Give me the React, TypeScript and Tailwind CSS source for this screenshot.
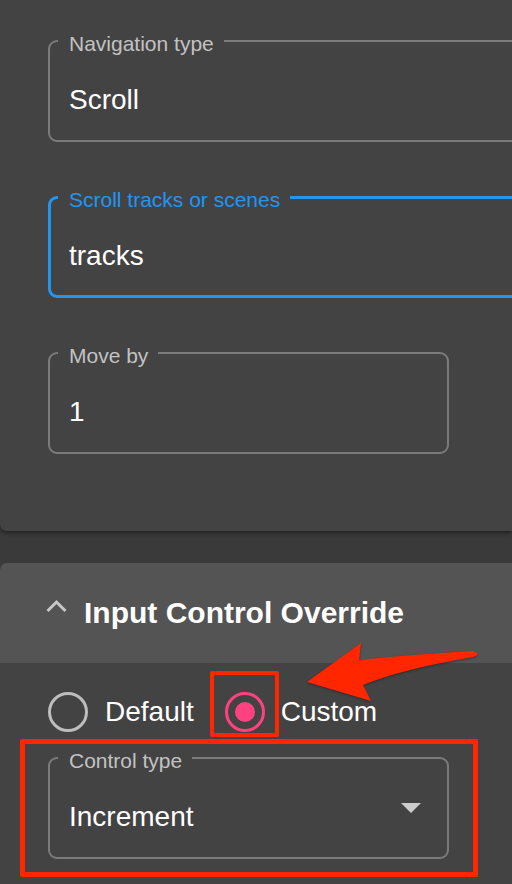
import React from 'react';

const font = { fontFamily: '"Liberation Sans", Arial, sans-serif' };

interface OutlinedFieldProps {
    label: string;
    value: string;
    focused?: boolean;
    select?: boolean;
    className?: string;
}

const OutlinedField: React.FC<OutlinedFieldProps> = ({ label, value, focused, select, className = '' }) => {
    return (
        <div
            className={`relative h-[102px] rounded-[9px] ${
                focused ? 'border-[3px] border-[#2196f3]' : 'border-2 border-[#7b7b7b]'
            } ${className}`}
        >
            {/* floating label sits over the top border */}
            <span
                className={`absolute ${focused ? 'left-[7px] top-[-11px]' : 'left-[8px] top-[-10px]'} px-[11px] pr-[10px] bg-[#434343] text-[21px] leading-[24px] whitespace-nowrap ${
                    focused ? 'text-[#2196f3]' : 'text-[#c2c2c2]'
                }`}
            >
                {label}
            </span>
            <div className={`${focused ? 'pt-[41px] pl-[18px]' : 'pt-[42px] pl-[19px]'} text-[28px] leading-[32px] text-white`}>
                {value}
            </div>
            {select && (
                <svg className="absolute right-[26px] top-[44px]" width="20" height="10" viewBox="0 0 20 10">
                    <path d="M0 0 L20 0 L10 10 Z" fill="#cdcdcd" />
                </svg>
            )}
        </div>
    );
};

export default function App() {
    return (
        <div className="w-[512px] h-[884px] overflow-hidden bg-[#3a3a3a] relative" style={font}>
            {/* Navigation settings card */}
            <div className="h-[531px] bg-[#434343] rounded-bl-[7px] shadow-[0_2px_4px_rgba(0,0,0,0.45)] pt-[40px] pl-[48px]">
                <div className="flex flex-col gap-[54px]">
                    <OutlinedField label="Navigation type" value="Scroll" className="w-[520px]" />
                    <OutlinedField label="Scroll tracks or scenes" value="tracks" focused className="w-[520px]" />
                    <OutlinedField label="Move by" value="1" className="w-[401px]" />
                </div>
            </div>

            {/* Input Control Override accordion */}
            <div className="mt-[32px] rounded-tl-[7px] overflow-hidden">
                <div className="h-[100px] bg-[#545454] flex items-center pl-[46px]">
                    <svg width="21" height="14" viewBox="0 0 21 14" className="mt-[-14px]">
                        <path d="M1.5 12 L10.5 3 L19.5 12" fill="none" stroke="#c8c8c8" strokeWidth="3" />
                    </svg>
                    <span className="ml-[17px] text-[30px] leading-[36px] font-bold text-white">Input Control Override</span>
                </div>

                <div className="h-[221px] bg-[#434343] pl-[48px] pt-[29px]">
                    <div className="flex items-center h-[40px]">
                        <div className="w-10 h-10 rounded-full border-[3px] border-[#bdbdbd]" />
                        <span className="ml-[17px] text-[28px] leading-[32px] text-white">Default</span>
                        <div className="ml-[31px] w-10 h-10 rounded-full border-[3px] border-[#ff4081] flex items-center justify-center">
                            <div className="w-5 h-5 rounded-full bg-[#ff4081]" />
                        </div>
                        <span className="ml-[16px] text-[28px] leading-[32px] text-white">Custom</span>
                    </div>

                    <OutlinedField label="Control type" value="Increment" select className="mt-[25px] w-[401px]" />
                </div>
            </div>

            {/* annotation overlays */}
            <div className="absolute left-[210px] top-[671px] w-[69px] h-[66px] border-[4px] border-[#ff2600] rounded-[2px]" />
            <div className="absolute left-[20px] top-[739px] w-[458px] h-[138px] border-[5px] border-[#ff2600] rounded-[2px]" />
            <svg className="absolute left-0 top-0 pointer-events-none" width="512" height="884" viewBox="0 0 512 884">
                <path
                    d="M307 682 L361 643 L359 660 Q418 654 473 651 Q482 654 473 657 Q402 669 363 685 L371 701 Z"
                    fill="#ff2600"
                    style={{ filter: 'drop-shadow(0 1px 1px rgba(0,0,0,0.35))' }}
                />
            </svg>
        </div>
    );
}
